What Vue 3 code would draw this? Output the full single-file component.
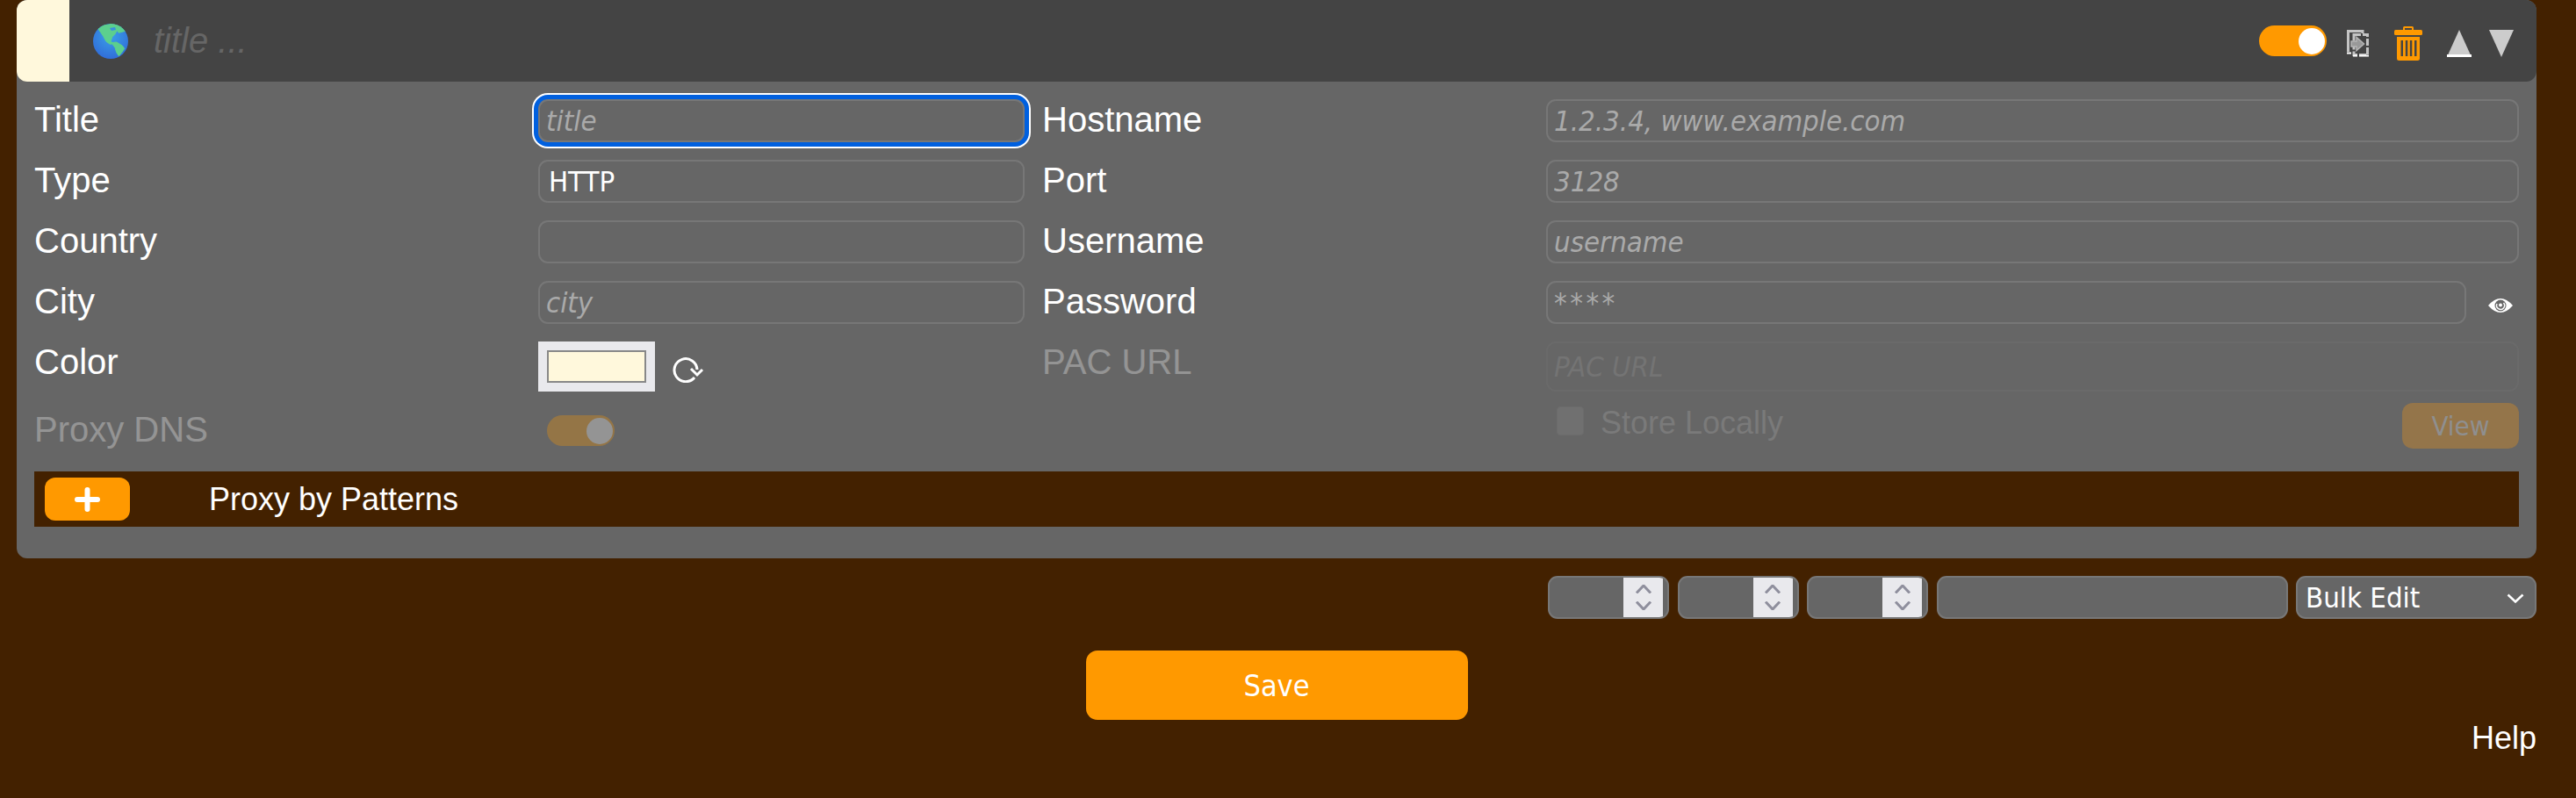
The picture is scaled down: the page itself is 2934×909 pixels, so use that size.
<template>
  <div class="page">
    <div class="card">
      <div class="head">
        <span class="swatch"></span>
        <svg class="globe" viewBox="0 0 40 40">
          <defs>
            <radialGradient id="sea" cx="0.5" cy="0.35" r="0.8">
              <stop offset="0" stop-color="#3aa0e8" />
              <stop offset="1" stop-color="#2f62d6" />
            </radialGradient>
            <clipPath id="ball"><circle cx="20" cy="20" r="20" /></clipPath>
          </defs>
          <circle cx="20" cy="20" r="20" fill="url(#sea)" />
          <g clip-path="url(#ball)" fill="#5ccf8e" stroke="#5ccf8e" stroke-linejoin="round">
            <path d="M6 6L11.7 2L23.3 0L31.7 2.7L36.7 8.3L29.3 10.3L27.3 7.7L25 11.7L21.7 15L20 20.3L23.3 22.7L19.3 23.3L15 20.3L11.7 14.3L8.3 9.3Z" />
            <path d="M20.7 21.7L26.7 21L33.3 25L35.7 28.3L32.7 32.7L29.3 36.7L26.7 32.7L25 27Z" />
          </g>
          <path d="M19 5L25 4L26 7L21 8Z" fill="#3a8fe0" />
        </svg>
        <span class="head-title">title ...</span>
        <div class="head-tools">
          <span class="toggle"><i></i></span>
          <svg class="copy" viewBox="0 0 25 31" fill="none" stroke="#c4c4c4" stroke-width="3">
            <path d="M18 4V1.500H1.500V25" />
            <rect x="8" y="5.500" width="15.500" height="23" stroke-dasharray="8 2" />
            <path d="M5 13H11V8.500L19.500 16L11 23.500V19H5Z" fill="#999" stroke="#b5b5b5" stroke-width="1.500" />
            <path d="M0 26.500H5M7 29.500H12M14 29.500H25" stroke="#fff" stroke-width="2" />
          </svg>
          <svg class="trash" viewBox="0 0 32 40" fill="#f90">
            <path d="M10 5V2.500Q10 1 11.500 1H20.500Q22 1 22 2.500V5H20V3H12V5Z" />
            <rect x="0" y="5" width="32" height="6" rx="1.500" />
            <path fill-rule="evenodd" d="M3 13H29V37.500Q29 40 26.500 40H5.500Q3 40 3 37.500ZM7.500 17V35H10V17ZM12.800 17V35H15.300V17ZM17.800 17V35H20.300V17ZM23 17V35H25.500V17Z" />
          </svg>
          <svg class="arrow up" viewBox="0 0 28 31">
            <polygon points="14,0 28,31 0,31" fill="#ccc" />
            <rect y="28" width="28" height="3" fill="#fff" />
          </svg>
          <svg class="arrow" viewBox="0 0 28 31">
            <polygon points="0,0 28,0 14,31" fill="#ccc" />
          </svg>
        </div>
      </div>

      <div class="body">
        <div class="grid">
          <label class="lbl">Title</label>
          <input class="ctl focus" type="text" placeholder="title" />
          <label class="lbl lbl-r">Hostname</label>
          <input class="ctl" type="text" placeholder="1.2.3.4, www.example.com" />

          <label class="lbl">Type</label>
          <select class="ctl sel"><option>HTTP</option></select>
          <label class="lbl lbl-r">Port</label>
          <input class="ctl" type="text" placeholder="3128" />

          <label class="lbl">Country</label>
          <select class="ctl sel"><option></option></select>
          <label class="lbl lbl-r">Username</label>
          <input class="ctl" type="text" placeholder="username" />

          <label class="lbl">City</label>
          <input class="ctl" type="text" placeholder="city" />
          <label class="lbl lbl-r">Password</label>
          <div class="pass">
            <input class="ctl" type="text" placeholder="****" />
            <svg class="eye" viewBox="0 0 28 16">
              <path d="M0 8Q7 0 14 0T28 8Q21 16 14 16T0 8Z" fill="#fff" />
              <circle cx="14" cy="8" r="6.500" fill="#666" />
              <path d="M10 6A4.500 4.500 0 1 0 17.500 5" fill="none" stroke="#fff" stroke-width="1.500" />
              <circle cx="14" cy="7.500" r="2" fill="#fff" />
            </svg>
          </div>

          <label class="lbl">Color</label>
          <div class="color">
            <input class="picker" type="color" value="#fff8dc" />
            <svg class="reset" viewBox="0 0 40 30" fill="none" stroke="#fff" stroke-width="3">
              <path d="M30 15A13 13 0 1 0 27 24" />
              <path d="M23 14L30 21L36 15" />
            </svg>
          </div>
          <label class="lbl lbl-r off">PAC URL</label>
          <input class="ctl pac" type="text" placeholder="PAC URL" disabled />
        </div>

        <div class="grid grid-last">
          <label class="lbl off dns">Proxy DNS</label>
          <div class="dns-cell"><span class="toggle toggle-off"><i></i></span></div>
          <span></span>
          <div class="store">
            <input class="check" type="checkbox" disabled />
            <span class="store-txt">Store Locally</span>
            <button class="view" disabled>View</button>
          </div>
        </div>

        <div class="band">
          <button class="add">
            <svg viewBox="0 0 29 28" width="29" height="28" stroke="#fff" stroke-width="6" stroke-linecap="round">
              <path d="M14.500 3V25M3 14H26" />
            </svg>
          </button>
          <span class="band-txt">Proxy by Patterns</span>
        </div>
      </div>
    </div>

    <div class="bulk">
      <div v-for="n in 3" :key="n" class="num">
        <input type="text" />
        <span class="spin">
          <svg viewBox="0 0 20 10" width="20" height="10"><path d="M2 9.500L10 1L18 9.500" /></svg>
          <svg viewBox="0 0 20 10" width="20" height="10"><path d="M2 .5L10 9L18 .5" /></svg>
        </span>
      </div>
      <input class="ctl bulk-text" type="text" />
      <div class="bulk-sel">
        <select class="ctl"><option>Bulk Edit</option></select>
        <svg viewBox="0 0 20 11" width="20" height="11"><path d="M1.500 1.500L10 9.500L18.500 1.500" /></svg>
      </div>
    </div>

    <div class="save-row"><button class="save">Save</button></div>
    <div class="help">Help</div>
  </div>
</template>

<script setup>
</script>

<style>
html, body { background: #432100; }
</style>

<style scoped>
.page {
  min-height: 909px;
  box-sizing: border-box;
  padding: 0 45px 0 19px;
  background: #432100;
  font-family: "Liberation Sans", Arial, sans-serif;
  font-size: 40px;
  color: #fff;
}
.card {
  background: #666;
  border-radius: 12px;
  padding-bottom: 36px;
}
.head {
  display: flex;
  align-items: center;
  height: 93px;
  background: #444;
  border-radius: 12px;
  overflow: hidden;
}
.swatch {
  width: 60px;
  height: 93px;
  background: #fff8dc;
}
.globe { width: 40px; height: 40px; margin-left: 27px; }
.head-title {
  margin-left: 29px;
  font-size: 40px;
  font-style: italic;
  color: #666;
}
.head-tools {
  margin-left: auto;
  display: flex;
  align-items: center;
  padding-right: 26px;
}
.toggle {
  display: block;
  box-sizing: border-box;
  width: 77px;
  height: 35px;
  background: #f90;
  border-radius: 18px;
  padding: 2.5px;
}
.toggle i {
  display: block;
  width: 30px;
  height: 30px;
  margin-left: auto;
  background: #fff;
  border-radius: 50%;
}
.toggle-off { opacity: 0.3; }
.copy { width: 25px; height: 31px; margin-left: 23px; margin-top: 5px; }
.trash { width: 32px; height: 40px; margin-left: 29px; margin-top: 4px; }
.arrow { width: 28px; height: 31px; margin-left: 20px; margin-top: 5px; }
.arrow.up { margin-left: 28px; }

.body { padding: 20px 20px 0; }
.grid {
  display: grid;
  grid-template-columns: 574px 554px 594px 1fr;
  row-gap: 20px;
  align-items: start;
}
.grid-last { margin-top: 13px; }
.lbl {
  display: block;
  line-height: 46px;
}
.lbl-r { padding-left: 20px; }
.off { opacity: 0.3; }
.dns { padding-top: 7px; }

.ctl {
  display: block;
  box-sizing: border-box;
  width: 100%;
  height: 49px;
  margin: 0;
  padding: 0 7px;
  border: 2px solid #777;
  border-radius: 11px;
  background: #666;
  color: #fff;
  font-family: "DejaVu Sans Condensed", "DejaVu Sans", sans-serif;
  font-stretch: condensed;
  font-size: 32.7px;
  outline: none;
}
.ctl::placeholder {
  color: #aaa;
  font-style: italic;
  opacity: 1;
}
.focus { box-shadow: 0 0 0 5px #0060df, 0 0 0 7px #fff; }
.sel {
  appearance: none;
  padding-left: 10px;
}
.pac { height: 57px; border-color: #6a6a6a; }
.pac::placeholder { color: #747474; }
.pass { display: flex; align-items: center; }
.pass .ctl { width: 1048px; }
.pass .ctl::placeholder { letter-spacing: 3.5px; }
.eye { width: 28px; height: 16px; margin-left: 25px; margin-top: 6px; }
.color { display: flex; align-items: center; }
.picker {
  appearance: none;
  width: 133px;
  height: 57px;
  padding: 0;
  border: 0;
  background: #e9e9ed;
}
.picker::-webkit-color-swatch-wrapper { padding: 10px; }
.picker::-webkit-color-swatch { border: 2px solid #888; border-radius: 0; }
.reset { width: 40px; height: 30px; margin-left: 18px; margin-top: 6px; }
.dns-cell { padding: 14px 0 0 10px; }
.store {
  grid-column: 4;
  display: flex;
  align-items: flex-start;
  height: 52px;
  padding-left: 12px;
}
.check {
  appearance: none;
  width: 31px;
  height: 33px;
  margin: 4px 19px 0 0;
  background: #707070;
  border: 1px solid #6c6c6c;
  border-radius: 4px;
}
.store-txt { margin-top: 2px; font-size: 36px; line-height: 41px; color: #7a7a7a; }
.view {
  margin-left: auto;
  width: 133px;
  height: 52px;
  border: 0;
  border-radius: 12px;
  background: #94754a;
  color: #8f8f8f;
  font-family: "DejaVu Sans Condensed", "DejaVu Sans", sans-serif;
  font-stretch: condensed;
  font-size: 31px;
}
.band {
  display: flex;
  align-items: center;
  height: 63px;
  margin-top: 25px;
  background: #432100;
}
.add {
  display: flex;
  align-items: center;
  justify-content: center;
  width: 97px;
  height: 49px;
  margin-left: 12px;
  padding: 0;
  border: 0;
  border-radius: 12px;
  background: #f90;
}
.band-txt { margin-left: 90px; font-size: 36px; line-height: 41px; }

.bulk {
  display: flex;
  justify-content: flex-end;
  gap: 9.5px;
  margin-top: 20px;
}
.num {
  display: flex;
  box-sizing: border-box;
  width: 138px;
  height: 49px;
  padding-right: 5px;
  background: #666;
  border: 2px solid #777;
  border-radius: 11px;
  overflow: hidden;
}
.num input {
  flex: 1;
  min-width: 0;
  border: 0;
  padding: 0;
  background: transparent;
  outline: none;
}
.spin {
  display: flex;
  flex-direction: column;
  align-items: center;
  justify-content: center;
  gap: 9px;
  width: 45px;
  background: #e9e9ed;
}
.spin path {
  fill: none;
  stroke: #8f8f9d;
  stroke-width: 3;
}
.bulk-text { width: 400px; }
.bulk-sel { position: relative; width: 274px; }
.bulk-sel select { appearance: none; padding-left: 9px; }
.bulk-sel svg {
  position: absolute;
  top: 20px;
  right: 14px;
  pointer-events: none;
}
.bulk-sel path { fill: none; stroke: #fff; stroke-width: 2.5; }
.save-row {
  display: flex;
  justify-content: center;
  margin-top: 36px;
}
.save {
  width: 435px;
  height: 79px;
  border: 0;
  border-radius: 13px;
  background: #f90;
  color: #fff;
  font-family: "DejaVu Sans Condensed", "DejaVu Sans", sans-serif;
  font-stretch: condensed;
  font-size: 34px;
}
.help {
  margin-top: -1px;
  text-align: right;
  font-size: 36px;
  line-height: 44px;
}
</style>
